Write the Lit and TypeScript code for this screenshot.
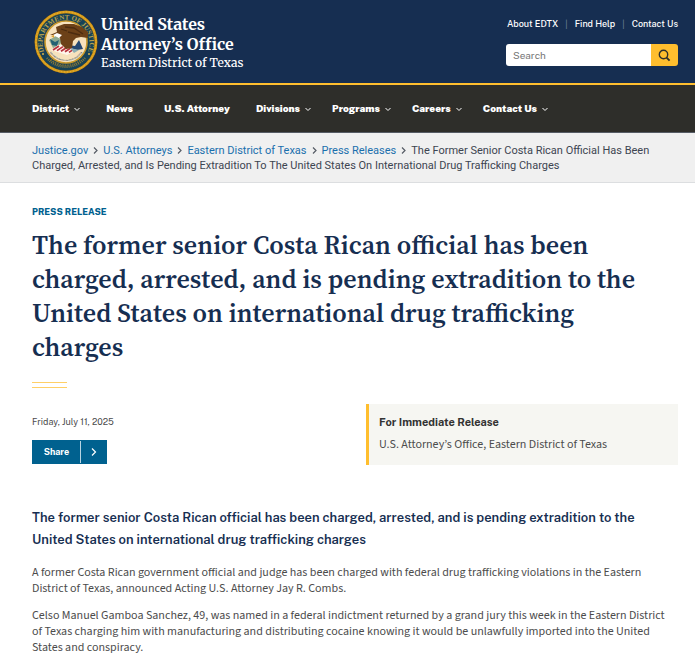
import { LitElement, html, css, svg } from "lit";
import { customElement } from "lit/decorators.js";

const NAV = [
  { label: "District", menu: true },
  { label: "News", menu: false },
  { label: "U.S. Attorney", menu: false },
  { label: "Divisions", menu: true },
  { label: "Programs", menu: true },
  { label: "Careers", menu: true },
  { label: "Contact Us", menu: true },
];

const CRUMBS = ["Justice.gov", "U.S. Attorneys", "Eastern District of Texas", "Press Releases"];

@customElement("doj-seal")
class DojSeal extends LitElement {
  static styles = css`
    :host { display: block; flex: none; width: 64px; height: 64px; }
    svg { display: block; width: 100%; height: 100%; }
    .ring { font: 700 7px "Liberation Serif", serif; fill: #b9a24e; }
    .motto { font: 700 2px "Liberation Serif", serif; fill: #17405a; }
  `;
  render() {
    const stripes = [0, 1, 2, 3, 4].map(
      (i) => svg`<path d="M${19 + i * 4} ${40 + i * 0.6}l6-4" stroke="#b8323c" stroke-width="1.7"/>`
    );
    return html`<svg viewBox="0 0 64 64" role="img" aria-label="Department of Justice seal">
      <defs>
        <path id="top" d="M11.500 44.500A23.500 23.500 0 1 1 52.500 44.500" />
        <path id="low" d="M14 39A19.500 19.500 0 0 0 50 39" />
      </defs>
      <circle cx="32" cy="32" r="31.500" fill="#8a6412" />
      <circle cx="32" cy="32" r="30" fill="none" stroke="#d79c1c" stroke-width="2.400" />
      <circle cx="32" cy="32" r="30" fill="none" stroke="#eab83c" stroke-width="1" stroke-dasharray="1 2" />
      <circle cx="32" cy="32" r="28.500" fill="#174257" />
      <circle cx="32" cy="32" r="21" fill="#f7e2bd" stroke="#c9982b" stroke-width="1.600" />
      <text class="ring"><textPath href="#top" startOffset="50%" text-anchor="middle">DEPARTMENT OF JUSTICE</textPath></text>
      <path d="M13 48A25 25 0 0 0 51 48" fill="none" stroke="#8d7c3a" stroke-width="2.500" stroke-dasharray="1 1" />
      <path d="M17 49.500A22.500 22.500 0 0 0 47 49.500" fill="none" stroke="#776c38" stroke-width="1.500" stroke-dasharray="1.500 1" />
      <circle cx="9" cy="44" r="1" fill="#d8b34a" /><circle cx="55" cy="44" r="1" fill="#d8b34a" />
      <path d="M15 30l7-4 6 4-3 7-6 1z" fill="#8eaa91" />
      <path d="M16 29l5 3 4-2-2 6-5-1z" fill="#236073" />
      <path d="M17 40l7-5 10-2 7 8-8 4z" fill="#fff7ec" />
      ${stripes}
      <path d="M34 35l7 1 4-6 4 9-6 1-7-2z" fill="#254872" />
      <path d="M36 38l9 2-5 3z" fill="#8eaeb2" />
      <path d="M22 17l8-3 10 0 8 3 6 5 0 6-7-1-5 1-3 3-1 7-6 1-5-5-1-6-4-3-6 0 7-3z" fill="#6c4118" />
      <path d="M31 17l9 1 9 6M34 22l12 3M27 19l6 2" stroke="#4c2c10" stroke-width="1.300" fill="none" />
      <path d="M19 25l4-2 5 2-3 3z" fill="#fff" />
      <path d="M17 26l3-1v3z" fill="#dba131" />
      <text class="motto"><textPath href="#low" startOffset="50%" text-anchor="middle">QUI PRO DOMINA JUSTITIA SEQUITUR</textPath></text>
    </svg>`;
  }
}

@customElement("app-root")
class AppRoot extends LitElement {
  static styles = css`
    :host {
      display: block;
      min-height: 100vh;
      background: #fff;
      color: #4c4c4c;
      font: 11px/16px "Public Sans", Roboto, "Liberation Sans", sans-serif;
    }
    * { box-sizing: border-box; }
    a { text-decoration: none; color: inherit; }
    h1, h2, p { margin: 0; }
    .banner {
      display: flex;
      justify-content: space-between;
      padding: 10px 17px 9px 34px;
      background: #162e51;
      color: #fff;
      border-bottom: 2px solid #ffbe2e;
    }
    .brand { display: flex; gap: 3px; }
    .names {
      display: flex;
      flex-direction: column;
      padding-top: 4px;
      font-family: Merriweather, "Liberation Serif", serif;
      font-weight: 700;
      font-size: 16px;
      line-height: 20px;
    }
    .district { font-size: 12px; line-height: 18px; font-weight: 500; }
    .tools { display: flex; flex-direction: column; align-items: flex-end; gap: 12px; padding-top: 6px; }
    .links { display: flex; gap: 7px; font-size: 9px; font-weight: 500; }
    .bar { color: #71809a; font-weight: 400; }
    .search { display: flex; width: 172px; height: 22px; border-radius: 3px; overflow: hidden; }
    .search input {
      flex: 1;
      min-width: 0;
      border: 0;
      padding: 0 7px;
      background: #fff;
      font: 10px/16px "Public Sans", Roboto, "Liberation Sans", sans-serif;
    }
    .search input::placeholder { color: #757575; opacity: 1; }
    .search button {
      display: grid;
      place-items: center;
      width: 27px;
      border: 0;
      padding: 0;
      background: #ffbe2e;
    }
    .nav {
      display: flex;
      align-items: center;
      gap: 21px;
      height: 48px;
      padding: 0 32px 1px;
      background: #2e2e2a;
      border-bottom: 1px solid #565c65;
      color: #fff;
      font-size: 10px;
      font-weight: 900;
    }
    .item { display: flex; align-items: center; gap: 5px; white-space: nowrap; }
    .plain { padding: 0 5px; }
    .chev { margin-top: 3px; }
    .crumbs {
      padding: 10px 32px 9px;
      background: #f0f0f0;
      border-bottom: 1px solid #dcdee0;
      color: #3d4551;
      font-family: Roboto, "Liberation Sans", sans-serif;
      line-height: 15px;
    }
    .crumbs a { color: #1a6fad; }
    .sep { margin: 0 5px; }
    .main { padding: 21px 17px 8px 32px; }
    .kicker { color: #00618f; font-size: 9px; font-weight: 800; }
    h1 {
      margin-top: 8px;
      padding-right: 20px;
      color: #162e51;
      font: 600 26px/34px "Source Serif 4", "Liberation Serif", serif;
    }
    .rule { width: 35px; height: 6px; margin-top: 18px; border: solid #ffcf66; border-width: 1px 0; }
    .meta { display: grid; grid-template-columns: 1fr 312px; gap: 22px; margin-top: 16px; }
    .date { padding-top: 10px; font-size: 9px; }
    .share {
      display: flex;
      align-items: stretch;
      height: 24px;
      margin-top: 10px;
      border: 1px solid #00618f;
      padding: 0;
      background: #00618f;
      color: #fff;
      font: 700 9px/22px "Public Sans", Roboto, "Liberation Sans", sans-serif;
    }
    .word { width: 48px; border-right: 1px solid #b8d4e2; }
    .arrow { display: grid; place-items: center; width: 25px; }
    .release { padding: 10px 10px 12px; border-left: 3px solid #ffbe2e; background: #f6f6f2; }
    .release h2 { color: #333; font-size: 11px; line-height: 17px; font-weight: 700; }
    .release p, .body p { font-family: "Source Sans 3", "Liberation Sans", sans-serif; font-size: 12px; }
    .release p { margin-top: 6px; }
    .lead { margin-top: 42px; color: #162e51; font-size: 13px; line-height: 22px; font-weight: 600; }
    .body { margin-top: 14px; padding-right: 10px; }
    .body p + p { margin-top: 11px; }
  `;

  render() {
    return html`
      <header>
        <div class="banner">
          <a class="brand" href="#">
            <doj-seal></doj-seal>
            <span class="names">
              <span>United States</span><span>Attorney’s Office</span>
              <span class="district">Eastern District of Texas</span>
            </span>
          </a>
          <div class="tools">
            <div class="links">
              <a href="#">About EDTX</a><span class="bar">|</span><a href="#">Find Help</a><span class="bar">|</span><a href="#">Contact Us</a>
            </div>
            <form class="search" role="search">
              <input type="search" placeholder="Search" aria-label="Search" />
              <button type="button" aria-label="Submit search">
                <svg width="13" height="13" viewBox="0 0 13 13" fill="none" stroke="#2f302c" stroke-width="1.400">
                  <circle cx="5.500" cy="5.500" r="4.200" /><path d="M8.600 8.600l3 3" stroke-width="1.800" />
                </svg>
              </button>
            </form>
          </div>
        </div>
        <nav class="nav" aria-label="Main">
          ${NAV.map((n) => html`<a class="item ${n.menu ? "" : "plain"}" href="#"><span>${n.label}</span>${n.menu
            ? html`<svg class="chev" width="6" height="5" viewBox="0 0 6 5" fill="none" stroke="#fff"><path d="M.5 1L3 3.500 5.500 1" /></svg>`
            : ""}</a>`)}
        </nav>
        <nav class="crumbs" aria-label="Breadcrumbs">
          ${CRUMBS.map((c) => html`<a href="#">${c}</a><svg class="sep" width="5" height="7" viewBox="0 0 5 7" fill="none" stroke="#565c65" stroke-width="1.200"><path d="M1 .5L4 3.500 1 6.500" /></svg>`)}<span>The Former Senior Costa Rican Official Has Been Charged, Arrested, and Is Pending Extradition To The United States On International Drug Trafficking Charges</span>
        </nav>
      </header>
      <main class="main">
        <p class="kicker">PRESS RELEASE</p>
        <h1>The former senior Costa Rican official has been charged, arrested, and is pending extradition to the United States on international drug trafficking charges</h1>
        <div class="rule"></div>
        <div class="meta">
          <div>
            <p class="date">Friday, July 11, 2025</p>
            <button class="share" type="button">
              <span class="word">Share</span>
              <span class="arrow"><svg width="6" height="8" viewBox="0 0 6 8" fill="none" stroke="#fff" stroke-width="1.200"><path d="M1 .5L4.500 4 1 7.500" /></svg></span>
            </button>
          </div>
          <section class="release">
            <h2>For Immediate Release</h2>
            <p>U.S. Attorney’s Office, Eastern District of Texas</p>
          </section>
        </div>
        <h2 class="lead">The former senior Costa Rican official has been charged, arrested, and is pending extradition to the United States on international drug trafficking charges</h2>
        <div class="body">
          <p>A former Costa Rican government official and judge has been charged with federal drug trafficking violations in the Eastern District of Texas, announced Acting U.S. Attorney Jay R. Combs.</p>
          <p>Celso Manuel Gamboa Sanchez, 49, was named in a federal indictment returned by a grand jury this week in the Eastern District of Texas charging him with manufacturing and distributing cocaine knowing it would be unlawfully imported into the United States and conspiracy.</p>
        </div>
      </main>
    `;
  }
}
